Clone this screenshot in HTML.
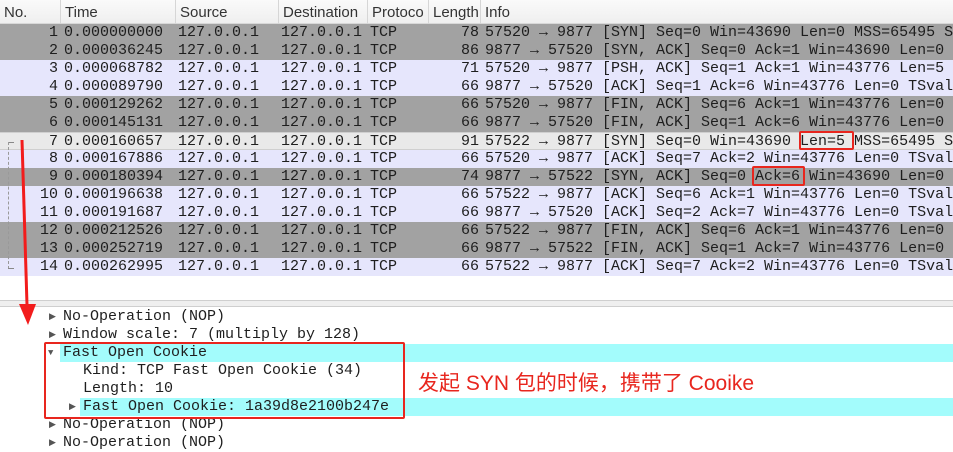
<!DOCTYPE html>
<html><head><meta charset="utf-8"><style>
*{margin:0;padding:0;box-sizing:border-box}
body{width:953px;height:441px;overflow:hidden;background:#fff;position:relative;font-family:"Liberation Mono",monospace;font-size:15px;color:#1e1e1e}
.hdr{position:absolute;left:0;top:0;width:953px;height:24px;background:linear-gradient(#fafafa,#efefef);border-bottom:1px solid #d8d8d8;font-family:"Liberation Sans","DejaVu Sans",sans-serif;font-size:15px;color:#333}
.hdr span{position:absolute;padding-left:4px;height:24px;border-left:1px solid #d6d6d6;top:0;line-height:25px}
.row{position:absolute;left:0;width:953px;height:18px;line-height:18px;white-space:pre}
.row span{position:absolute;top:0}
.d{background:#a2a2a2}.l{background:#e6e6fc}.s{background:#e9e9e9;border-top:1px solid #cfcfcf;border-bottom:1px solid #cfcfcf}
.no{right:895px;text-align:right}
.t{left:64px}.sr{left:178px}.ds{left:281px}.p{left:370px}.ln{right:474px}.inf{left:485px}
.rb{position:absolute;border:2px solid #e8261e;border-radius:2px}
.det{position:absolute;left:0;width:953px;height:18px;line-height:18px;white-space:pre}
.tri{position:absolute;font-size:9px;color:#555;top:0}
</style></head><body>
<div class="hdr">
<span style="left:-1px;border:none;padding-left:5px">No.</span>
<span style="left:60px">Time</span>
<span style="left:175px">Source</span>
<span style="left:278px">Destination</span>
<span style="left:367px">Protoco</span>
<span style="left:428px">Length</span>
<span style="left:480px">Info</span>
</div>

<div class="row d" style="top:24px"><span class="no">1</span><span class="t">0.000000000</span><span class="sr">127.0.0.1</span><span class="ds">127.0.0.1</span><span class="p">TCP</span><span class="ln">78</span><span class="inf">57520 → 9877 [SYN] Seq=0 Win=43690 Len=0 MSS=65495 S</span></div>
<div class="row d" style="top:42px"><span class="no">2</span><span class="t">0.000036245</span><span class="sr">127.0.0.1</span><span class="ds">127.0.0.1</span><span class="p">TCP</span><span class="ln">86</span><span class="inf">9877 → 57520 [SYN, ACK] Seq=0 Ack=1 Win=43690 Len=0</span></div>
<div class="row l" style="top:60px"><span class="no">3</span><span class="t">0.000068782</span><span class="sr">127.0.0.1</span><span class="ds">127.0.0.1</span><span class="p">TCP</span><span class="ln">71</span><span class="inf">57520 → 9877 [PSH, ACK] Seq=1 Ack=1 Win=43776 Len=5</span></div>
<div class="row l" style="top:78px"><span class="no">4</span><span class="t">0.000089790</span><span class="sr">127.0.0.1</span><span class="ds">127.0.0.1</span><span class="p">TCP</span><span class="ln">66</span><span class="inf">9877 → 57520 [ACK] Seq=1 Ack=6 Win=43776 Len=0 TSval</span></div>
<div class="row d" style="top:96px"><span class="no">5</span><span class="t">0.000129262</span><span class="sr">127.0.0.1</span><span class="ds">127.0.0.1</span><span class="p">TCP</span><span class="ln">66</span><span class="inf">57520 → 9877 [FIN, ACK] Seq=6 Ack=1 Win=43776 Len=0</span></div>
<div class="row d" style="top:114px"><span class="no">6</span><span class="t">0.000145131</span><span class="sr">127.0.0.1</span><span class="ds">127.0.0.1</span><span class="p">TCP</span><span class="ln">66</span><span class="inf">9877 → 57520 [FIN, ACK] Seq=1 Ack=6 Win=43776 Len=0</span></div>
<div class="row s" style="top:132px"><span class="no">7</span><span class="t">0.000160657</span><span class="sr">127.0.0.1</span><span class="ds">127.0.0.1</span><span class="p">TCP</span><span class="ln">91</span><span class="inf">57522 → 9877 [SYN] Seq=0 Win=43690 Len=5 MSS=65495 S</span></div>
<div class="row l" style="top:150px"><span class="no">8</span><span class="t">0.000167886</span><span class="sr">127.0.0.1</span><span class="ds">127.0.0.1</span><span class="p">TCP</span><span class="ln">66</span><span class="inf">57520 → 9877 [ACK] Seq=7 Ack=2 Win=43776 Len=0 TSval</span></div>
<div class="row d" style="top:168px"><span class="no">9</span><span class="t">0.000180394</span><span class="sr">127.0.0.1</span><span class="ds">127.0.0.1</span><span class="p">TCP</span><span class="ln">74</span><span class="inf">9877 → 57522 [SYN, ACK] Seq=0 Ack=6 Win=43690 Len=0</span></div>
<div class="row l" style="top:186px"><span class="no">10</span><span class="t">0.000196638</span><span class="sr">127.0.0.1</span><span class="ds">127.0.0.1</span><span class="p">TCP</span><span class="ln">66</span><span class="inf">57522 → 9877 [ACK] Seq=6 Ack=1 Win=43776 Len=0 TSval</span></div>
<div class="row l" style="top:204px"><span class="no">11</span><span class="t">0.000191687</span><span class="sr">127.0.0.1</span><span class="ds">127.0.0.1</span><span class="p">TCP</span><span class="ln">66</span><span class="inf">9877 → 57520 [ACK] Seq=2 Ack=7 Win=43776 Len=0 TSval</span></div>
<div class="row d" style="top:222px"><span class="no">12</span><span class="t">0.000212526</span><span class="sr">127.0.0.1</span><span class="ds">127.0.0.1</span><span class="p">TCP</span><span class="ln">66</span><span class="inf">57522 → 9877 [FIN, ACK] Seq=6 Ack=1 Win=43776 Len=0</span></div>
<div class="row d" style="top:240px"><span class="no">13</span><span class="t">0.000252719</span><span class="sr">127.0.0.1</span><span class="ds">127.0.0.1</span><span class="p">TCP</span><span class="ln">66</span><span class="inf">9877 → 57522 [FIN, ACK] Seq=1 Ack=7 Win=43776 Len=0</span></div>
<div class="row l" style="top:258px"><span class="no">14</span><span class="t">0.000262995</span><span class="sr">127.0.0.1</span><span class="ds">127.0.0.1</span><span class="p">TCP</span><span class="ln">66</span><span class="inf">57522 → 9877 [ACK] Seq=7 Ack=2 Win=43776 Len=0 TSval</span></div>

<div style="position:absolute;left:8px;top:142px;width:6px;height:1px;background:#888"></div>
<div style="position:absolute;left:8px;top:142px;width:1px;height:127px;border-left:1px dashed #999"></div>
<div style="position:absolute;left:8px;top:268px;width:6px;height:1px;background:#888"></div>

<div class="rb" style="left:799px;top:131px;width:55px;height:19px"></div>
<div class="rb" style="left:752px;top:166px;width:53px;height:20px"></div>

<div style="position:absolute;left:0;top:300px;width:953px;height:7px;background:#efefef;border-top:1px solid #cfcfcf;border-bottom:1px solid #cfcfcf"></div>

<div class="det" style="top:308px"><span class="tri" style="left:49px">▶</span><span style="position:absolute;left:63px">No-Operation (NOP)</span></div>
<div class="det" style="top:326px"><span class="tri" style="left:49px">▶</span><span style="position:absolute;left:63px">Window scale: 7 (multiply by 128)</span></div>
<div class="det" style="top:344px;background:linear-gradient(to right,#fff 60px,#a3fcfc 60px)"><span class="tri" style="left:48px">▼</span><span style="position:absolute;left:63px">Fast Open Cookie</span></div>
<div class="det" style="top:362px"><span style="position:absolute;left:83px">Kind: TCP Fast Open Cookie (34)</span></div>
<div class="det" style="top:380px"><span style="position:absolute;left:83px">Length: 10</span></div>
<div class="det" style="top:398px;background:linear-gradient(to right,#fff 80px,#a3fcfc 80px)"><span class="tri" style="left:69px">▶</span><span style="position:absolute;left:83px">Fast Open Cookie: 1a39d8e2100b247e</span></div>
<div class="det" style="top:416px"><span class="tri" style="left:49px">▶</span><span style="position:absolute;left:63px">No-Operation (NOP)</span></div>
<div class="det" style="top:434px"><span class="tri" style="left:49px">▶</span><span style="position:absolute;left:63px">No-Operation (NOP)</span></div>

<div class="rb" style="left:44px;top:342px;width:361px;height:77px"></div>
<div style="position:absolute;left:418px;top:371px;font-family:'Liberation Sans','Noto Sans CJK SC',sans-serif;font-size:21px;line-height:26px;color:#e8261e;white-space:nowrap">发起 SYN 包的时候，携带了 Cooike</div>

<svg style="position:absolute;left:0;top:0" width="953" height="441">
<line x1="22" y1="140" x2="27" y2="305" stroke="#f21c1c" stroke-width="3"/>
<polygon points="19,304 36,304 28,325" fill="#f21c1c"/>
</svg>
</body></html>
